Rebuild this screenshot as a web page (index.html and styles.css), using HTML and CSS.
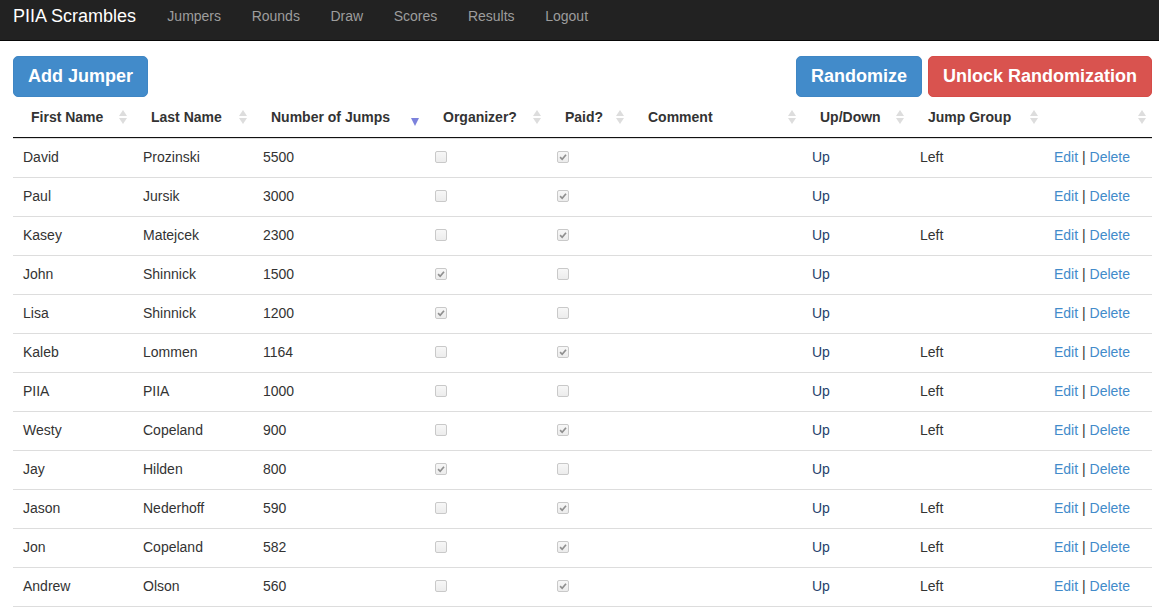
FILE: index.html
```html
<!DOCTYPE html>
<html>
<head>
<meta charset="utf-8">
<title>PIIA Scrambles</title>
<link rel="stylesheet" href="styles.css">
</head>
<body>
<nav class="navbar">
  <span class="brand">PIIA Scrambles</span>
  <a class="nav-link">Jumpers</a>
  <a class="nav-link">Rounds</a>
  <a class="nav-link">Draw</a>
  <a class="nav-link">Scores</a>
  <a class="nav-link">Results</a>
  <a class="nav-link">Logout</a>
</nav>
<main class="container">
  <div class="toolbar">
    <button class="btn btn-primary">Add Jumper</button>
    <div class="toolbar-right">
      <button class="btn btn-primary">Randomize</button>
      <button class="btn btn-danger">Unlock Randomization</button>
    </div>
  </div>
  <table class="jumpers">
    <colgroup>
      <col class="c1"><col class="c2"><col class="c3"><col class="c4"><col class="c5"><col class="c6"><col class="c7"><col class="c8"><col class="c9">
    </colgroup>
    <thead>
      <tr>
        <th><div class="th-inner"><span>First Name</span><i class="sort both"></i></div></th>
        <th><div class="th-inner"><span>Last Name</span><i class="sort both"></i></div></th>
        <th><div class="th-inner"><span>Number of Jumps</span><i class="sort desc"></i></div></th>
        <th><div class="th-inner"><span>Organizer?</span><i class="sort both"></i></div></th>
        <th><div class="th-inner"><span>Paid?</span><i class="sort both"></i></div></th>
        <th><div class="th-inner"><span>Comment</span><i class="sort both"></i></div></th>
        <th><div class="th-inner"><span>Up/Down</span><i class="sort both"></i></div></th>
        <th><div class="th-inner"><span>Jump Group</span><i class="sort both"></i></div></th>
        <th><div class="th-inner"><span></span><i class="sort both"></i></div></th>
      </tr>
    </thead>
    <tbody>
      <tr><td>David</td><td>Prozinski</td><td>5500</td><td><span class="cb"></span></td><td><span class="cb on"><svg viewBox="0 0 12 12"><path d="M2.5 6.2 L5 8.7 L9.6 3.2"/></svg></span></td><td></td><td class="ud">Up</td><td>Left</td><td><a>Edit</a> | <a>Delete</a></td></tr>
      <tr><td>Paul</td><td>Jursik</td><td>3000</td><td><span class="cb"></span></td><td><span class="cb on"><svg viewBox="0 0 12 12"><path d="M2.5 6.2 L5 8.7 L9.6 3.2"/></svg></span></td><td></td><td class="ud">Up</td><td></td><td><a>Edit</a> | <a>Delete</a></td></tr>
      <tr><td>Kasey</td><td>Matejcek</td><td>2300</td><td><span class="cb"></span></td><td><span class="cb on"><svg viewBox="0 0 12 12"><path d="M2.5 6.2 L5 8.7 L9.6 3.2"/></svg></span></td><td></td><td class="ud">Up</td><td>Left</td><td><a>Edit</a> | <a>Delete</a></td></tr>
      <tr><td>John</td><td>Shinnick</td><td>1500</td><td><span class="cb on"><svg viewBox="0 0 12 12"><path d="M2.5 6.2 L5 8.7 L9.6 3.2"/></svg></span></td><td><span class="cb"></span></td><td></td><td class="ud">Up</td><td></td><td><a>Edit</a> | <a>Delete</a></td></tr>
      <tr><td>Lisa</td><td>Shinnick</td><td>1200</td><td><span class="cb on"><svg viewBox="0 0 12 12"><path d="M2.5 6.2 L5 8.7 L9.6 3.2"/></svg></span></td><td><span class="cb"></span></td><td></td><td class="ud">Up</td><td></td><td><a>Edit</a> | <a>Delete</a></td></tr>
      <tr><td>Kaleb</td><td>Lommen</td><td>1164</td><td><span class="cb"></span></td><td><span class="cb on"><svg viewBox="0 0 12 12"><path d="M2.5 6.2 L5 8.7 L9.6 3.2"/></svg></span></td><td></td><td class="ud">Up</td><td>Left</td><td><a>Edit</a> | <a>Delete</a></td></tr>
      <tr><td>PIIA</td><td>PIIA</td><td>1000</td><td><span class="cb"></span></td><td><span class="cb"></span></td><td></td><td class="ud">Up</td><td>Left</td><td><a>Edit</a> | <a>Delete</a></td></tr>
      <tr><td>Westy</td><td>Copeland</td><td>900</td><td><span class="cb"></span></td><td><span class="cb on"><svg viewBox="0 0 12 12"><path d="M2.5 6.2 L5 8.7 L9.6 3.2"/></svg></span></td><td></td><td class="ud">Up</td><td>Left</td><td><a>Edit</a> | <a>Delete</a></td></tr>
      <tr><td>Jay</td><td>Hilden</td><td>800</td><td><span class="cb on"><svg viewBox="0 0 12 12"><path d="M2.5 6.2 L5 8.7 L9.6 3.2"/></svg></span></td><td><span class="cb"></span></td><td></td><td class="ud">Up</td><td></td><td><a>Edit</a> | <a>Delete</a></td></tr>
      <tr><td>Jason</td><td>Nederhoff</td><td>590</td><td><span class="cb"></span></td><td><span class="cb on"><svg viewBox="0 0 12 12"><path d="M2.5 6.2 L5 8.7 L9.6 3.2"/></svg></span></td><td></td><td class="ud">Up</td><td>Left</td><td><a>Edit</a> | <a>Delete</a></td></tr>
      <tr><td>Jon</td><td>Copeland</td><td>582</td><td><span class="cb"></span></td><td><span class="cb on"><svg viewBox="0 0 12 12"><path d="M2.5 6.2 L5 8.7 L9.6 3.2"/></svg></span></td><td></td><td class="ud">Up</td><td>Left</td><td><a>Edit</a> | <a>Delete</a></td></tr>
      <tr><td>Andrew</td><td>Olson</td><td>560</td><td><span class="cb"></span></td><td><span class="cb on"><svg viewBox="0 0 12 12"><path d="M2.5 6.2 L5 8.7 L9.6 3.2"/></svg></span></td><td></td><td class="ud">Up</td><td>Left</td><td><a>Edit</a> | <a>Delete</a></td></tr>
    </tbody>
  </table>
</main>
</body>
</html>
```
FILE: styles.css
```css
* { box-sizing: border-box; }
html, body { margin: 0; padding: 0; }
body {
  font-family: "Liberation Sans", Arial, Helvetica, sans-serif;
  font-size: 14px;
  line-height: 20px;
  color: #333;
  background: #fff;
  overflow: hidden;
}
.navbar {
  display: flex;
  align-items: flex-start;
  height: 41px;
  background: #222;
  border-bottom: 1px solid #080808;
  padding-top: 6px;
}
.brand {
  color: #fff;
  font-size: 18px;
  line-height: 20px;
  padding-left: 13px;
  margin-right: 16px;
}
.nav-link {
  color: #9d9d9d;
  font-size: 14px;
  line-height: 20px;
  padding: 0 15.3px;
}
.container {
  width: 1139px;
  margin-left: 13px;
}
.toolbar {
  display: flex;
  justify-content: space-between;
  margin-top: 15px;
}
.toolbar-right { display: flex; gap: 6px; }
.btn {
  height: 41px;
  font-family: inherit;
  font-size: 18px;
  font-weight: bold;
  color: #fff;
  border: 1px solid transparent;
  border-radius: 5px;
  padding: 0 14px 2px;
  line-height: 24px;
}
.btn-primary { background: #428bca; border-color: #3f86c4; }
.btn-danger { background: #d9534f; border-color: #d64c48; }
.jumpers {
  width: 1139px;
  table-layout: fixed;
  border-collapse: separate;
  border-spacing: 0;
}
.c1, .c2 { width: 120px; }
.c3, .c6 { width: 172px; }
.c4 { width: 122px; }
.c5 { width: 83px; }
.c7, .c9 { width: 108px; }
.c8 { width: 134px; }
.jumpers th {
  text-align: left;
  font-weight: bold;
  padding: 10px 5px 10px 18px;
  border-bottom: 1px solid #111;
  line-height: 20px;
}
.th-inner {
  display: flex;
  justify-content: space-between;
  align-items: center;
  height: 20px;
}
.sort {
  position: relative;
  display: block;
  width: 9px;
  height: 16px;
  flex: none;
}
.sort.both::before, .sort.both::after {
  content: "";
  position: absolute;
  left: 0;
  border-left: 4.5px solid transparent;
  border-right: 4.5px solid transparent;
}
.sort.both::before { top: 1px; border-bottom: 6px solid #ddd; }
.sort.both::after { top: 9px; border-top: 6px solid #ddd; }
.sort.desc::after {
  content: "";
  position: absolute;
  left: 0;
  top: 9px;
  border-left: 4.5px solid transparent;
  border-right: 4.5px solid transparent;
  border-top: 8px solid #7c82dc;
}
.jumpers td {
  padding: 8px 10px 10px;
  border-top: 1px solid #ddd;
  line-height: 20px;
  vertical-align: middle;
  white-space: nowrap;
}
.jumpers tbody tr:last-child td { border-bottom: 1px solid #ddd; }
.jumpers td.ud { color: #253f6b; }
.jumpers a { color: #428bca; text-decoration: none; }
.cb {
  display: inline-block;
  width: 12px;
  height: 12px;
  border: 1px solid #c9c9c9;
  border-radius: 2px;
  background: linear-gradient(#f7f7f7, #ececec);
  vertical-align: middle;
  position: relative;
  top: -1px;
}
.cb svg { display: block; width: 10px; height: 10px; }
.cb svg path { fill: none; stroke: #8f8f8f; stroke-width: 2; }
```
